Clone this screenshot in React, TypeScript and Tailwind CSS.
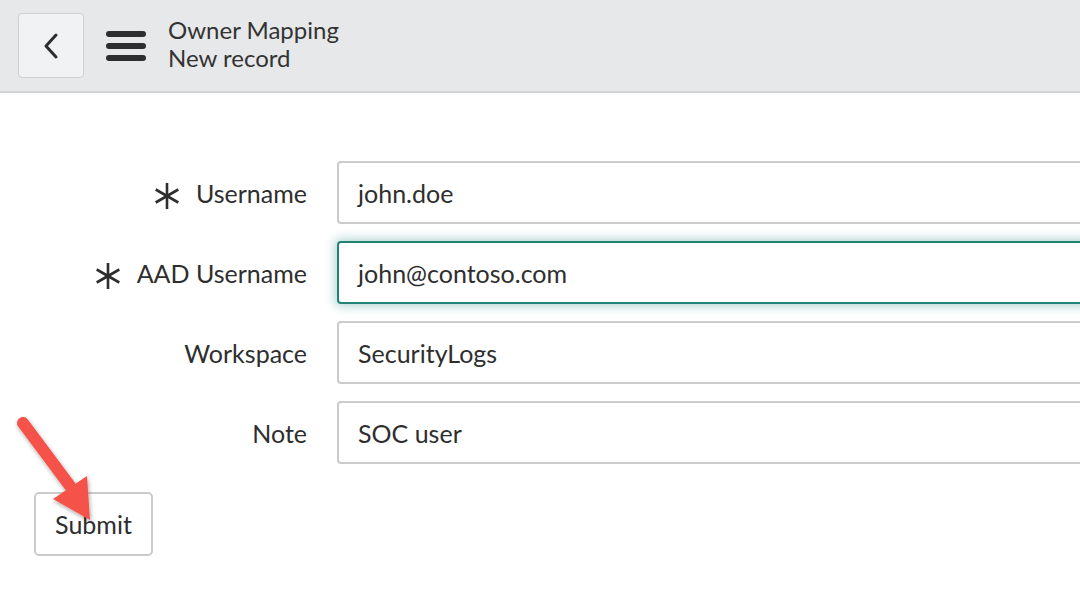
import React from 'react';

const fields = [
  { label: 'Username', value: 'john.doe', required: true, focused: false },
  { label: 'AAD Username', value: 'john@contoso.com', required: true, focused: true },
  { label: 'Workspace', value: 'SecurityLogs', required: false, focused: false },
  { label: 'Note', value: 'SOC user', required: false, focused: false },
];

export default function App() {
  return (
    <div className="relative h-[604px] w-[1080px] overflow-hidden bg-white text-[#2e2e2e]" style={{ fontFamily: 'Lato, "Open Sans", sans-serif' }}>
      {/* Header */}
      <header className="flex h-[93px] items-center border-b-2 border-[#d2d3d4] bg-[#e7e8e9] pl-[18px]">
        <button className="flex h-[65px] w-[66px] items-center justify-center rounded-[4px] border border-[#cfd0d1] bg-[#f1f2f3]">
          <svg width="20" height="30" viewBox="0 0 20 30" fill="none">
            <path d="M15 4 L5 15 L15 26" stroke="#2e2e2e" strokeWidth="3" strokeLinecap="round" strokeLinejoin="round" />
          </svg>
        </button>
        <div className="ml-[22px] flex w-[40px] flex-col gap-[6px]">
          <span className="h-[6px] rounded-full bg-[#2e2e2e]" />
          <span className="h-[6px] rounded-full bg-[#2e2e2e]" />
          <span className="h-[6px] rounded-full bg-[#2e2e2e]" />
        </div>
        <div className="ml-[22px] -mt-[3px] flex flex-col text-[24px] leading-[28px] text-[#333]">
          <span>Owner Mapping</span>
          <span>New record</span>
        </div>
      </header>

      {/* Form */}
      <div className="flex flex-col gap-[17px] pt-[68px]">
        {fields.map((f) => (
          <div key={f.label} className="flex items-center">
            <div className="flex w-[307px] shrink-0 items-center justify-end gap-[15px] pt-[2px] text-[25px]">
              {f.required && (
                <svg width="28" height="28" viewBox="0 0 28 28" className="mt-[4px]">
                  <g stroke="#2e2e2e" strokeWidth="2.6">
                    <line x1="14" y1="1" x2="14" y2="27" />
                    <line x1="2.7" y1="7.5" x2="25.3" y2="20.5" />
                    <line x1="2.7" y1="20.5" x2="25.3" y2="7.5" />
                  </g>
                </svg>
              )}
              <span>{f.label}</span>
            </div>
            <div
              className={
                f.focused
                  ? 'ml-[30px] flex h-[63px] w-[800px] shrink-0 items-center rounded-[4px] border-2 border-[#1f8476] bg-white pt-[2px] pl-[19px] text-[25px] shadow-[0_0_10px_3px_rgba(31,132,118,0.3)]'
                  : 'ml-[30px] flex h-[63px] w-[800px] shrink-0 items-center rounded-[4px] border-2 border-[#cbcbcb] bg-white pt-[2px] pl-[19px] text-[25px]'
              }
            >
              {f.value}
            </div>
          </div>
        ))}
      </div>

      <div className="pl-[34px] pt-[28px]">
        <button className="h-[64px] w-[119px] rounded-[5px] border-2 border-[#cbcbcb] bg-white pt-[2px] text-[25px] text-[#2e2e2e]">
          Submit
        </button>
      </div>

      {/* Annotation arrow */}
      <svg className="absolute left-0 top-0" width="140" height="560" viewBox="0 0 140 560">
        <defs>
          <filter id="sh" x="-50%" y="-50%" width="200%" height="200%">
            <feDropShadow dx="1" dy="2" stdDeviation="2" floodColor="#000" floodOpacity="0.35" />
          </filter>
        </defs>
        <g filter="url(#sh)" fill="#f5524a">
          <line x1="23" y1="423" x2="70" y2="486" stroke="#f5524a" strokeWidth="12" strokeLinecap="round" />
          <polygon points="87,476 90,520 53,499" />
        </g>
      </svg>
    </div>
  );
}
